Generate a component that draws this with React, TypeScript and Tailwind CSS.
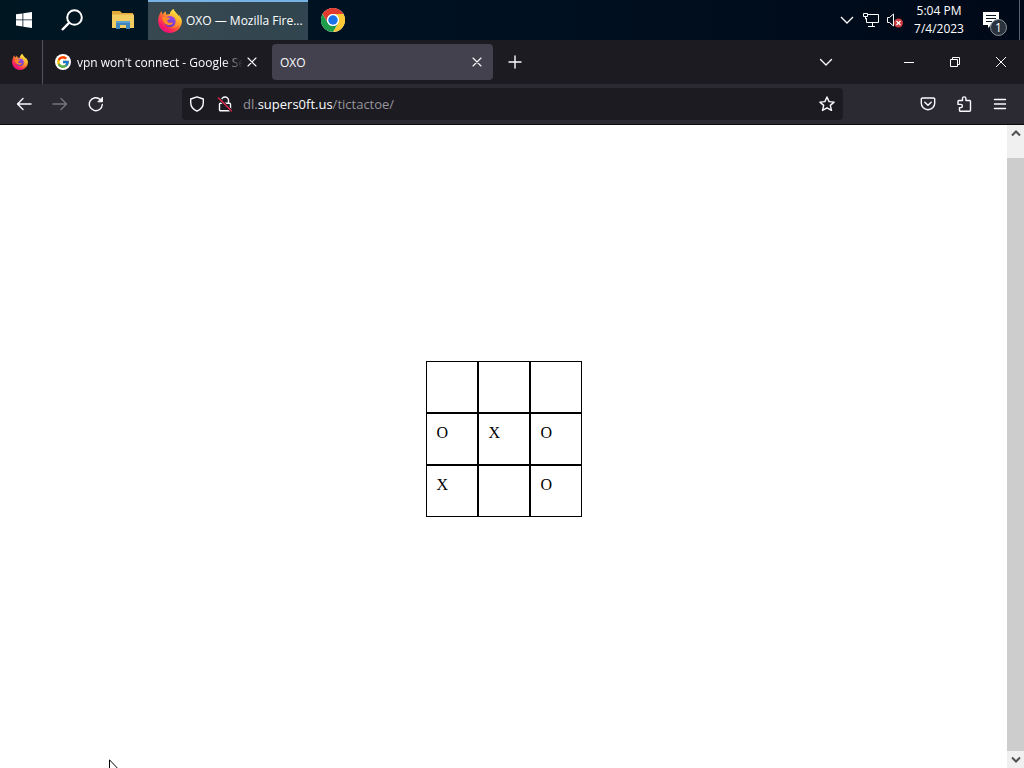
import { useId } from "react";
import type { ReactNode } from "react";
import { FcGoogle } from "react-icons/fc";

function FirefoxLogo({ className }: { className: string }) {
  const id = useId();
  return (
    <svg viewBox="0 0 24 24" className={className} aria-hidden="true">
      <defs>
        <linearGradient id={id + "a"} x1="0.85" y1="0.1" x2="0.2" y2="0.95">
          <stop offset="0" stopColor="#fff44f" />
          <stop offset="0.3" stopColor="#ffb02e" />
          <stop offset="0.55" stopColor="#ff5a36" />
          <stop offset="0.85" stopColor="#f5156c" />
          <stop offset="1" stopColor="#e31587" />
        </linearGradient>
        <linearGradient id={id + "b"} x1="0.7" y1="0" x2="0.3" y2="1">
          <stop offset="0" stopColor="#a347e8" />
          <stop offset="1" stopColor="#5b3ac6" />
        </linearGradient>
        <linearGradient id={id + "c"} x1="0.7" y1="0" x2="0.4" y2="1">
          <stop offset="0" stopColor="#fff04a" />
          <stop offset="0.5" stopColor="#ffb52e" />
          <stop offset="1" stopColor="#ff6a2e" />
        </linearGradient>
      </defs>
      <path
        fill={`url(#${id}a)`}
        d="M22.7 8.4c-.5-1.2-1.5-2.5-2.3-2.9.6 1.2 1 2.4 1.100 3.300C20.200 5.500 18 4.200 16.200 1.400 15.800.8 15.600.5 15.500 0c-2.300 1.300-3.400 3.700-3.700 5.100-1 .1-2 .3-2.900.7C7.800 4.900 7.800 3.400 8 2.600 6.500 3.300 5.300 4.500 4.500 5.400 3.900 4.700 3.900 2.500 4 2 2.500 3 1.300 5.500.8 7.600.2 9.300 0 11.500.2 13.500 1 19.500 6 24 12 24c6.400 0 11.600-5 11.900-11.200.1-1.500-.4-3.200-1.200-4.400z"
      />
      <path
        fill={`url(#${id}c)`}
        d="M15.500 0c-2.300 1.300-3.400 3.700-3.700 5.100 3.500.2 6.200 2.900 6.200 6.400 0 4.600-3.700 7-7 6.500 6.500 3.600 12.600-2.200 10.900-8.300C20.700 5.500 16.500 4 15.500 0z"
      />
      <circle cx="12" cy="12.500" r="5.600" fill={`url(#${id}b)`} />
      <path
        fill="#ff8a24"
        d="M4 8.300c1.500-1 3.400-.6 4.600.1 1.300.2 2.800.1 3.600.5 0 1.200-2.600 1.600-2.900 2.600-.3 1.500 1.500 2.700 3.600 2 1-.3 2 .1 2 .7-1.100 1.600-3 2.400-5.100 1.800C6.500 15.200 4.500 12 4 8.300z"
      />
    </svg>
  );
}

function ChromeLogo() {
  return (
    <svg viewBox="0 0 48 48" className="size-6" aria-hidden="true">
      <circle cx="24" cy="24" r="24" fill="#fff" />
      <path fill="#e33b2e" d="M3.200 12A24 24 0 0 1 44.800 12H24A12 12 0 0 0 13.600 30z" />
      <path fill="#fcc934" d="M44.800 12A24 24 0 0 1 24 48L34.400 30A12 12 0 0 0 24 12z" />
      <path fill="#1e9e4a" d="M24 48A24 24 0 0 1 3.200 12L13.600 30A12 12 0 0 0 34.400 30z" />
      <circle cx="24" cy="24" r="12" fill="#fff" />
      <circle cx="24" cy="24" r="9.500" fill="#1a73e8" />
    </svg>
  );
}

function Line({ d, className = "size-4", width = 1.4 }: { d: string; className?: string; width?: number }) {
  return (
    <svg
      viewBox="0 0 16 16"
      className={className}
      fill="none"
      stroke="currentColor"
      strokeWidth={width}
      strokeLinecap="round"
      strokeLinejoin="round"
      aria-hidden="true"
    >
      <path d={d} />
    </svg>
  );
}

function IconButton({ label, className, children }: { label: string; className: string; children: ReactNode }) {
  return (
    <button type="button" aria-label={label} className={`flex shrink-0 items-center justify-center ${className}`}>
      {children}
    </button>
  );
}

function Taskbar() {
  return (
    <header className="flex h-10 shrink-0 bg-linear-to-r from-[#001722] via-[#001020] to-[#000918] text-white">
      <IconButton label="Start" className="w-12">
        <svg viewBox="0 0 16 16" className="size-4" fill="#fff" aria-hidden="true">
          <path d="M0 2.300 6.500 1.400V7.500H0zM7.300 1.300 16 0v7.500H7.300zM0 8.300h6.500v6.200L0 13.600zM7.300 8.300H16V16l-8.700-1.300z" />
        </svg>
      </IconButton>
      <IconButton label="Search" className="w-12">
        <svg viewBox="0 0 22 22" className="size-[22px]" fill="none" stroke="#fff" strokeWidth="2" aria-hidden="true">
          <circle cx="13.500" cy="8.500" r="7.300" />
          <path d="M8.300 13.700 1 21" strokeWidth="2.400" />
        </svg>
      </IconButton>
      <IconButton label="File Explorer" className="w-[52px] pl-[2px]">
        <svg viewBox="0 0 22 18" className="h-[18px] w-[22px]" aria-hidden="true">
          <path fill="#e0a93a" d="M0 0h8l2 2h11v5H0z" />
          <path fill="#f3cd62" d="M0 3.500h22V17H0z" />
          <path fill="#3f86bd" d="M4 10h14v8h-4v-4H8v4H4z" />
          <path fill="#5aa0d0" d="M4 10h14v2H4z" />
        </svg>
      </IconButton>
      <button
        type="button"
        className="flex w-40 items-center gap-1 border-t-2 border-[#76b2e4] bg-linear-to-r from-[#384850] to-[#30454f] pl-[10px] text-xs"
      >
        <FirefoxLogo className="size-6 shrink-0" />
        <span className="whitespace-nowrap">OXO — Mozilla Fire...</span>
      </button>
      <IconButton label="Chrome" className="w-[50px]">
        <ChromeLogo />
      </IconButton>
      <div className="ml-auto flex items-center">
        <IconButton label="Show hidden icons" className="h-10 w-6">
          <svg viewBox="0 0 14 8" className="h-2 w-[14px]" fill="none" stroke="#fff" strokeWidth="1.300" aria-hidden="true">
            <path d="M1 1l6 6 6-6" />
          </svg>
        </IconButton>
        <IconButton label="Network" className="h-10 w-6">
          <svg viewBox="0 0 16 14" className="h-[14px] w-4" fill="none" stroke="#fff" aria-hidden="true">
            <path d="M5 1.500h10.500v8H3.500V5M9.500 9.500v4M5 13.500h7M.5.500h4v3h-4zM2.500 3.500V6h1" />
          </svg>
        </IconButton>
        <IconButton label="Volume muted" className="h-10 w-6">
          <svg viewBox="0 0 16 16" className="size-4" aria-hidden="true">
            <path d="M.5 5.500h2L6.500 2v12L2.500 10.500h-2z" fill="none" stroke="#fff" />
            <circle cx="11.500" cy="11" r="4.500" fill="#cc3a3f" />
            <path d="M9.500 9l4 4m0-4-4 4" stroke="#fff" strokeWidth="1.200" />
          </svg>
        </IconButton>
        <button type="button" className="w-16 text-center text-xs leading-[18px] whitespace-nowrap">
          5:04 PM
          <br />
          7/4/2023
        </button>
        <IconButton label="1 new notification" className="h-10 w-12 pt-2">
          <svg viewBox="0 0 24 24" className="size-6" aria-hidden="true">
            <path fill="#fff" d="M0 0h16v13H8l-3 3v-3H0z" />
            <path stroke="#07131f" d="M3 3.500h10M3 6.500h10M3 9.500h6" />
            <circle cx="15.500" cy="15.500" r="8" fill="#2a333d" stroke="#8a9299" />
            <text x="15.500" y="20" fill="#fff" fontSize="12" textAnchor="middle">
              1
            </text>
          </svg>
        </IconButton>
        <div className="h-10 w-[5px] border-l border-[#5a626c]" />
      </div>
    </header>
  );
}

function TabStrip() {
  return (
    <div className="flex h-11 shrink-0 items-center bg-[#1c1b22] text-xs text-[#fbfbfe]">
      <div className="flex h-11 w-[43px] items-center border-r border-[#55545c] pl-3">
        <FirefoxLogo className="size-4" />
      </div>
      <div className="flex h-9 w-[221px] items-center pl-3">
        <span className="flex size-4 shrink-0 items-center justify-center rounded-full bg-white">
          <FcGoogle className="size-[14px]" />
        </span>
        <span className="ml-[6px] w-[166px] mask-r-from-88% mask-r-to-100% pt-px whitespace-nowrap">
          vpn won't connect - Google Se
        </span>
        <IconButton label="Close tab" className="h-6 w-[18px]">
          <Line d="M4 4l8 8m0-8-8 8" width={1.100} />
        </IconButton>
      </div>
      <div className="ml-2 flex h-9 w-[221px] items-center justify-between rounded bg-[#42414d] pr-[7px] pl-2">
        <span className="pt-px">OXO</span>
        <IconButton label="Close tab" className="h-6 w-[18px]">
          <Line d="M4 4l8 8m0-8-8 8" width={1.100} />
        </IconButton>
      </div>
      <IconButton label="New tab" className="ml-1 h-9 w-9">
        <Line d="M8 2v12M2 8h12" />
      </IconButton>
      <IconButton label="List all tabs" className="mr-10 ml-auto h-9 w-10">
        <Line d="M2.500 5.500 8 11l5.500-5.500" />
      </IconButton>
      <IconButton label="Minimize" className="h-11 w-[46px]">
        <svg viewBox="0 0 10 10" className="size-[10px]" stroke="#fff" aria-hidden="true">
          <path d="M0 5.500h10" />
        </svg>
      </IconButton>
      <IconButton label="Restore" className="h-11 w-[46px]">
        <svg viewBox="0 0 10 10" className="size-[10px]" fill="none" stroke="#fff" aria-hidden="true">
          <path d="M.5 2.500h7v7h-7zM2.500 2V.5h7v7H8" />
        </svg>
      </IconButton>
      <IconButton label="Close window" className="h-11 w-[46px]">
        <svg viewBox="0 0 10 10" className="size-[10px]" stroke="#fff" aria-hidden="true">
          <path d="M0 0l10 10M10 0 0 10" />
        </svg>
      </IconButton>
    </div>
  );
}

function NavBar() {
  return (
    <nav className="flex h-[41px] shrink-0 items-center border-b border-[#0c0c0d] bg-[#2b2a33] px-[6px] text-[#fbfbfe]">
      <IconButton label="Back" className="h-8 w-9">
        <Line d="M15 8H1.500M7 2.500 1.500 8 7 13.500" />
      </IconButton>
      <IconButton label="Forward" className="h-8 w-9 text-[#76757e]">
        <Line d="M1 8h13.500M9 2.500 14.500 8 9 13.500" />
      </IconButton>
      <IconButton label="Reload" className="h-8 w-9">
        <svg viewBox="0 0 16 16" className="size-4" fill="none" stroke="currentColor" strokeWidth="1.400" strokeLinecap="round" aria-hidden="true">
          <path d="M14.300 8.500A6.500 6.500 0 1 1 12.300 3.500" />
          <path d="M14.500 1.500v4.300h-4.300z" fill="currentColor" strokeWidth="1" strokeLinejoin="round" />
        </svg>
      </IconButton>
      <div className="mr-[67px] ml-[68px] flex h-8 flex-1 items-center rounded bg-[#1c1b22] pl-px">
        <IconButton label="Tracking protection" className="h-7 w-7">
          <Line d="M8 .8 14.300 3v3.500c0 4-2.300 7-6.300 8.700C4 13.500 1.700 10.500 1.700 6.500V3z" />
        </IconButton>
        <IconButton label="Connection not secure" className="h-7 w-7">
          <svg viewBox="0 0 16 16" className="size-4" fill="none" strokeLinecap="round" aria-hidden="true">
            <path d="M4.500 7V4.500a3.500 3.500 0 0 1 7 0V7M3.500 7.200h9a1 1 0 0 1 1 1v5.500a1 1 0 0 1-1 1h-9a1 1 0 0 1-1-1V8.200a1 1 0 0 1 1-1z" stroke="#fbfbfe" strokeWidth="1.400" />
            <path d="M2 2.500l12 12" stroke="#1c1b22" strokeWidth="3" />
            <path d="M1.500 2l12.800 12.800" stroke="#e22850" strokeWidth="1.500" />
          </svg>
        </IconButton>
        <a href="#board" className="ml-1 flex-1 pt-[2px] text-[13px] whitespace-nowrap text-[#96959c]">
          dl.<span className="text-[#fbfbfe]">supers0ft.us</span>/tictactoe/
        </a>
        <IconButton label="Bookmark this page" className="mr-[2px] h-7 w-7">
          <Line d="M8 1l2.100 4.600 5 .5-3.800 3.300 1.200 5L8 11.800l-4.500 2.600 1.200-5L.9 6.100l5-.5z" />
        </IconButton>
      </div>
      <IconButton label="Save to Pocket" className="h-8 w-9">
        <Line d="M2.500 2h11a1.200 1.200 0 0 1 1.200 1.200v4a6.700 6.500 0 0 1-13.400 0v-4A1.200 1.200 0 0 1 2.500 2zM4.800 6.300 8 9.300l3.200-3" />
      </IconButton>
      <IconButton label="Extensions" className="h-8 w-9">
        <Line d="M5.500 4.500h1V2.600a1.700 1.700 0 0 1 3.400 0v1.900h3.600a1 1 0 0 1 1 1v8.700a1 1 0 0 1-1 1H4.500a1 1 0 0 1-1-1v-2.600h1.300a1.600 1.600 0 0 0 0-3.200H2V5.500a1 1 0 0 1 1-1z" />
      </IconButton>
      <IconButton label="Open application menu" className="h-8 w-9">
        <Line d="M2.500 3.500h11M2.500 8h11M2.500 12.500h11" />
      </IconButton>
    </nav>
  );
}

const board = ["", "", "", "O", "X", "O", "X", "", "O"];

function Board() {
  return (
    <div id="board" className="grid grid-cols-3 font-['Liberation_Serif',serif] text-base leading-[18px] text-black">
      {board.map((mark, index) => (
        <button
          key={index}
          type="button"
          aria-label={`Square ${index + 1} ${mark}`}
          className="flex size-[52px] items-start justify-start border border-black p-[10px]"
        >
          {mark}
        </button>
      ))}
    </div>
  );
}

function ScrollBar() {
  return (
    <div className="flex w-[17px] shrink-0 flex-col bg-[#f0f0f0] text-[#505050]">
      <IconButton label="Scroll up" className="h-[17px]">
        <svg viewBox="0 0 10 7" className="h-[7px] w-[10px]" fill="none" stroke="currentColor" strokeWidth="2" aria-hidden="true">
          <path d="M1 5.500l4-4 4 4" />
        </svg>
      </IconButton>
      <div className="mt-4 flex-1 bg-[#cdcdcd]" />
      <IconButton label="Scroll down" className="h-[17px]">
        <svg viewBox="0 0 10 7" className="h-[7px] w-[10px]" fill="none" stroke="currentColor" strokeWidth="2" aria-hidden="true">
          <path d="M1 1.500l4 4 4-4" />
        </svg>
      </IconButton>
    </div>
  );
}

export default function App() {
  return (
    <div className="relative flex h-screen flex-col overflow-hidden bg-white font-['Open_Sans','Noto_Sans',sans-serif]">
      <Taskbar />
      <TabStrip />
      <NavBar />
      <div className="flex min-h-0 flex-1">
        <main className="flex flex-1 items-center justify-center pb-[15px]">
          <Board />
        </main>
        <ScrollBar />
      </div>
      <svg viewBox="0 0 12 19" className="absolute -bottom-[10px] left-[109px] h-[19px] w-3" aria-hidden="true">
        <path d="M.5.800v15.500l3.600-3.500 2.400 5.400 2-.9-2.300-5.200h5z" fill="#fff" stroke="#000" />
      </svg>
    </div>
  );
}
